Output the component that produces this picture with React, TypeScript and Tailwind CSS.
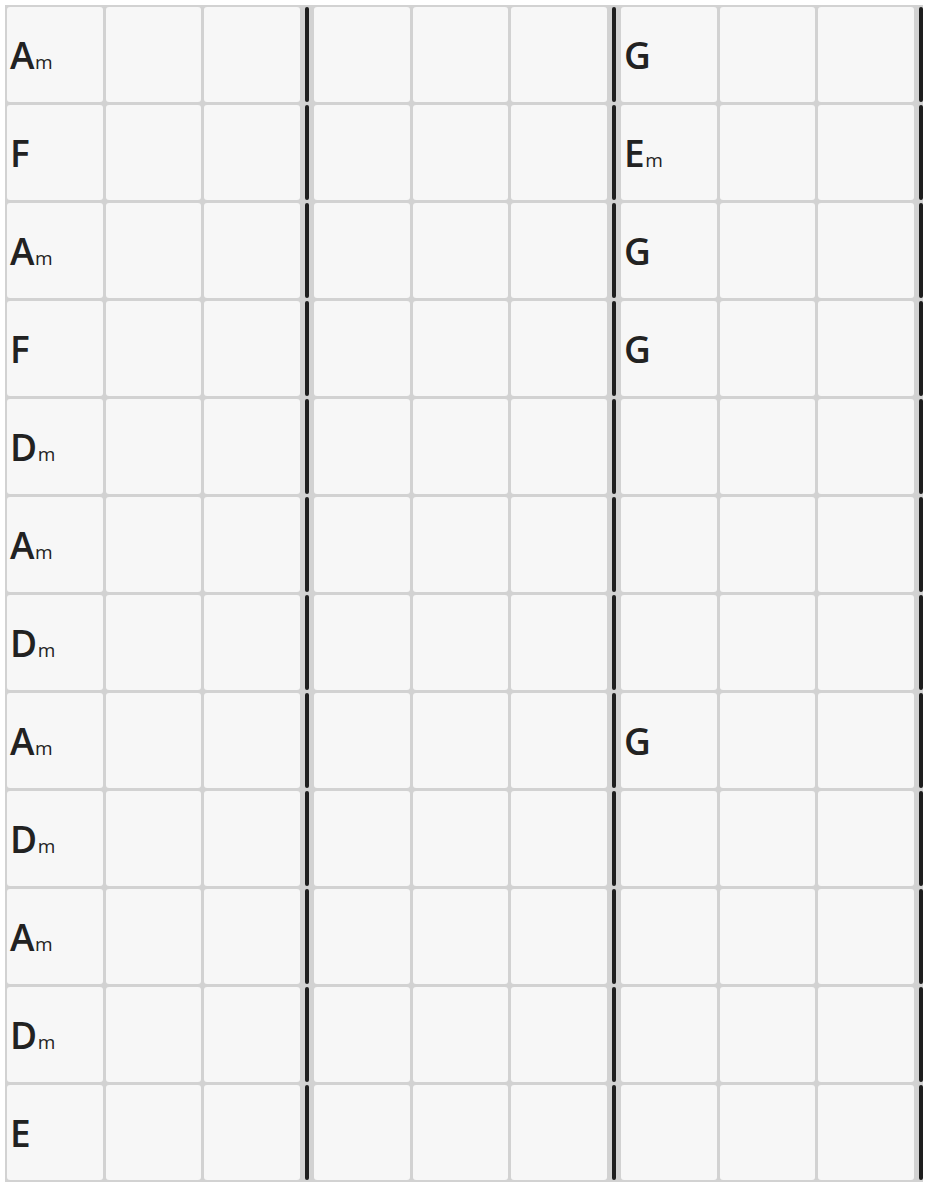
import React from "react";

type Chord = { root: string; q?: string } | null;

const rows: [Chord, Chord][] = [
  [{ root: "A", q: "m" }, { root: "G" }],
  [{ root: "F" }, { root: "E", q: "m" }],
  [{ root: "A", q: "m" }, { root: "G" }],
  [{ root: "F" }, { root: "G" }],
  [{ root: "D", q: "m" }, null],
  [{ root: "A", q: "m" }, null],
  [{ root: "D", q: "m" }, null],
  [{ root: "A", q: "m" }, { root: "G" }],
  [{ root: "D", q: "m" }, null],
  [{ root: "A", q: "m" }, null],
  [{ root: "D", q: "m" }, null],
  [{ root: "E" }, null],
];

function ChordLabel({ c }: { c: Chord }) {
  if (!c) return null;
  return (
    <span className="pl-[3px] text-[37px] font-semibold text-[#222222] whitespace-nowrap tracking-[-0.5px]">
      {c.root}
      {c.q && <span className="text-[19px] font-normal ml-[1px]">{c.q}</span>}
    </span>
  );
}

function Cell({ c }: { c?: Chord }) {
  return (
    <div className="flex-1 h-[95px] bg-[#f7f7f7] rounded-[3px] flex items-center overflow-hidden">
      {c ? <ChordLabel c={c} /> : null}
    </div>
  );
}

function Measure({ first, last }: { first?: Chord; last?: boolean }) {
  return (
    <div className={last ? "flex w-[302px]" : "flex w-[307px]"}>
      <div className="flex w-[293px] gap-[3px]">
        <Cell c={first} />
        <Cell />
        <Cell />
      </div>
      <div className={last ? "w-[9px] h-[95px] pl-[5px]" : "w-[14px] h-[95px] pl-[5px]"}>
        <div className="w-[4px] h-full bg-[#1e1e1e] rounded-[2px]" />
      </div>
    </div>
  );
}

export default function App() {
  return (
    <div
      className="bg-white w-[930px] h-[1188px] overflow-hidden pt-[5px] pl-[5px]"
      style={{ fontFamily: '"Open Sans", "Liberation Sans", sans-serif' }}
    >
      <div className="bg-[#d2d2d2] w-fit p-[2px] pr-0 flex flex-col gap-[3px]">
        {rows.map((r, i) => (
          <div key={i} className="flex">
            <Measure first={r[0]} />
            <Measure />
            <Measure first={r[1]} last />
          </div>
        ))}
      </div>
    </div>
  );
}
